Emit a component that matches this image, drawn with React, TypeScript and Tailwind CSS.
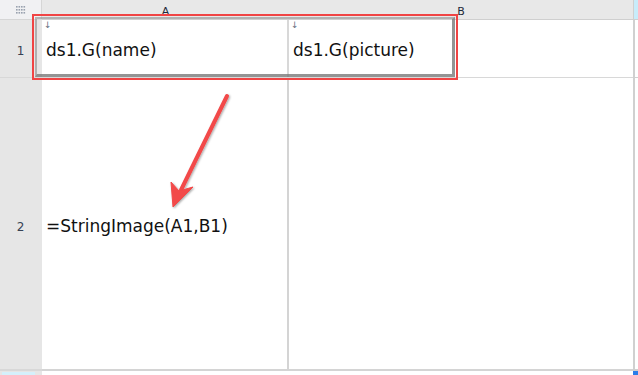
const font = "font-['Lucida_Grande','DejaVu_Sans',sans-serif]";

const CellMark = () => (
    <span className="absolute left-[2px] top-[1px] text-[9px] leading-none text-gray-500">↓</span>
);

const CornerDots = () => (
    <svg width="10" height="8" viewBox="0 0 10 8" className="text-gray-400">
        {[0, 1, 2].map(r =>
            [0, 1, 2, 3].map(c => (
                <rect key={`${r}-${c}`} x={c * 2.5} y={r * 3} width="1.6" height="1.6" fill="currentColor"/>
            ))
        )}
    </svg>
);

const App = () => {
    return (
        <div className={`relative h-[375px] w-[638px] overflow-hidden bg-white ${font}`}>
            <div className="grid grid-cols-[42px_247px_344px_5px] grid-rows-[20px_58px_293px_4px]">
                {/* header row */}
                <div className="flex items-center justify-center border-b border-r border-[#d6d6d6] bg-[#f1f1f3]">
                    <CornerDots/>
                </div>
                <div className="flex items-end justify-center border-b border-[#cfcfcf] bg-[#e8e8e8] pb-[2px] text-[11px] leading-none text-gray-800">A</div>
                <div className="flex items-end justify-center border-b border-[#cfcfcf] bg-[#e8e8e8] pb-[2px] text-[11px] leading-none text-gray-800">B</div>
                <div className="border-b border-l border-[#cfcfcf] bg-[#c8ecfa]"/>

                {/* row 1 */}
                <div className="flex items-center justify-center border-b border-[#d8d8d8] bg-[#e6e6e6] pt-[4px] pr-[1px] text-[12px] text-gray-700">1</div>
                <div className="relative flex items-center border-b border-r-2 border-[#d8d8d8] pt-[4px] pl-[4px] text-[17px] text-[#111]">
                    <CellMark/>
                    ds1.G(name)
                </div>
                <div className="relative flex items-center border-b border-[#d8d8d8] pt-[4px] pl-[4px] text-[17px] text-[#111]">
                    <CellMark/>
                    ds1.G(picture)
                </div>
                <div className="border-b border-l-2 border-[#d0d0d0]"/>

                {/* row 2 */}
                <div className="flex items-center justify-center border-b-2 border-[#d8d8d8] bg-[#e6e6e6] pt-[6px] pr-[1px] text-[12px] text-gray-700">2</div>
                <div className="flex items-center border-b-2 border-r-2 border-[#d4d4d4] pt-[6px] pl-[4px] text-[17px] text-[#111]">
                    =StringImage(A1,B1)
                </div>
                <div className="border-b-2 border-[#d4d4d4]"/>
                <div className="border-b-2 border-l-2 border-[#d0d0d0]"/>

                {/* bottom strip */}
                <div className="bg-[#e6e6e6] px-[2px] pt-[1px]">
                    <div className="h-[3px] w-[33px] bg-[#d5f0fb]"/>
                </div>
                <div/>
                <div/>
                <div className="bg-[#2b7de9]"/>
            </div>

            {/* annotation: selection frame */}
            <div className="absolute left-[32px] top-[14px] h-[66px] w-[426px] border-2 border-[#f04444] p-[1px]">
                <div className="h-full w-full border-[2px] border-[#9a9a9a]/70 border-b-[3px] border-r-[3px] border-b-[#7a7a7a]/80 border-r-[#7a7a7a]/80"/>
            </div>

            {/* annotation: arrow */}
            <svg className="absolute left-0 top-0" width="638" height="375" viewBox="0 0 638 375">
                <defs>
                    <filter id="sh" x="-20%" y="-20%" width="140%" height="140%">
                        <feDropShadow dx="1" dy="1" stdDeviation="1" floodColor="#000" floodOpacity="0.35"/>
                    </filter>
                </defs>
                <g filter="url(#sh)" fill="#f24848" stroke="#f24848">
                    <line x1="227" y1="96" x2="181" y2="190" strokeWidth="4" strokeLinecap="round"/>
                    <polygon points="173,207 171,182 179,191 193,187" strokeWidth="1" strokeLinejoin="round"/>
                </g>
            </svg>
        </div>
    );
};

export default App;
